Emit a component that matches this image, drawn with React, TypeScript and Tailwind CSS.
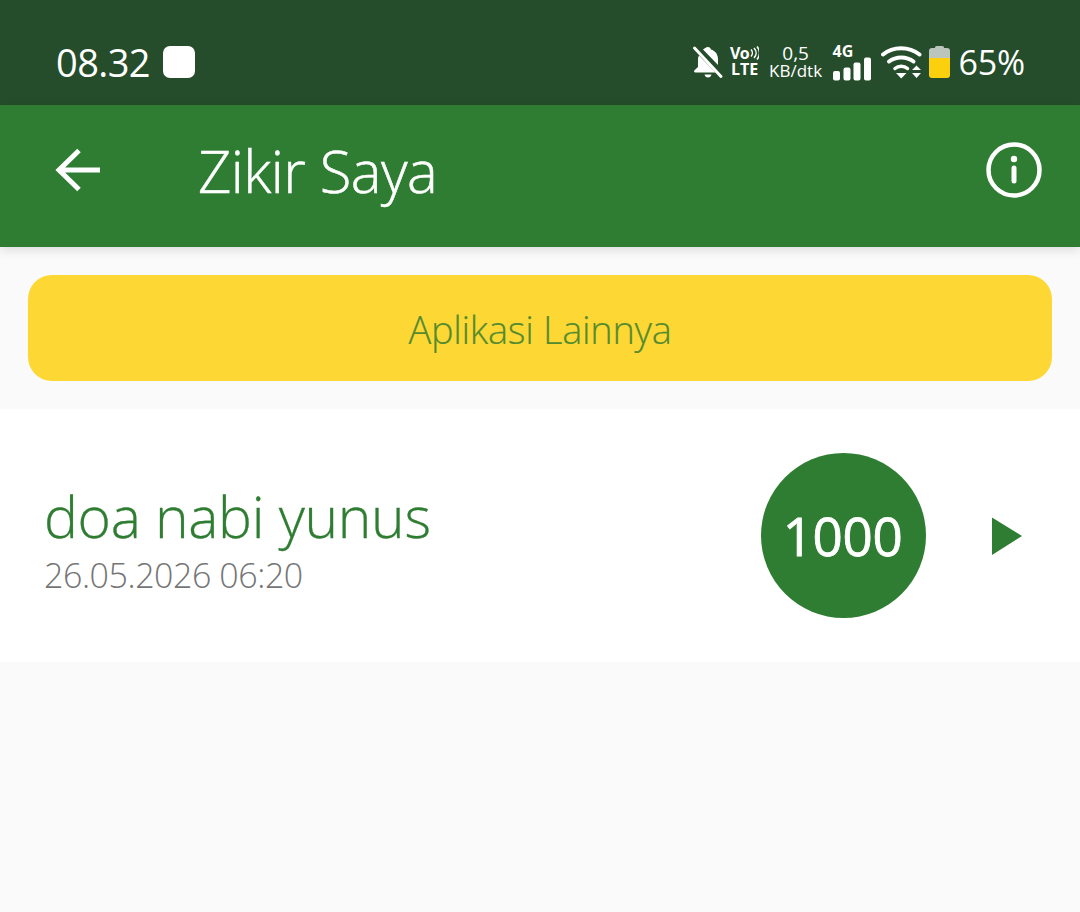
import React from "react";

const F = "font-['Open_Sans',sans-serif]";

function Bell() {
  return (
    <svg width="32" height="34" viewBox="0 0 32 34" className="block">
      <path d="M16 2c1.600 0 2.700 1 2.900 2.400C23.500 5.700 26 9.500 26 14v6L11 4.500C12.300 3.500 14 2 16 2z" fill="#fff" />
      <path d="M7 10.500 23.500 27.500H3.500c-1.500 0-1.900-1.400-1-2.300L6 22v-8c0-1.300.3-2.500 1-3.500z" fill="#fff" />
      <path d="M12.500 29.500h7c-.4 1.700-1.800 3-3.500 3s-3.100-1.300-3.500-3z" fill="#fff" />
      <path d="M2.500 3 29 31.500" stroke="#fff" strokeWidth="3" strokeLinecap="round" />
    </svg>
  );
}

function Signal() {
  return (
    <svg width="38" height="24" viewBox="0 0 38 24" className="block">
      <rect x="0" y="14" width="7" height="9.500" rx="2" fill="#fff" />
      <rect x="10.500" y="10.500" width="7" height="13" rx="2" fill="#fff" />
      <rect x="20.500" y="5.500" width="7" height="18" rx="2" fill="#fff" />
      <rect x="31" y="0.500" width="7" height="23" rx="2" fill="#fff" />
    </svg>
  );
}

function Wifi() {
  return (
    <svg width="41" height="34" viewBox="0 0 41 34" className="block">
      <path d="M2 9.500C12 1 28 1 38.500 9.500" stroke="#fff" strokeWidth="4" fill="none" strokeLinecap="round" />
      <path d="M8 16.500C15 11 25.500 11 32.500 16.500" stroke="#fff" strokeWidth="4" fill="none" strokeLinecap="round" />
      <path d="M14 23.500C17.500 20.500 23 20.500 26.500 23.500" stroke="#fff" strokeWidth="3.500" fill="none" strokeLinecap="round" />
      <path d="M15 28h10.500l-5.250 5.500z" fill="#fff" />
      <path d="M31 25l4.500-4.500L40 25z M31 28h9l-4.500 5z" fill="#fff" />
    </svg>
  );
}

function Battery() {
  return (
    <svg width="21" height="33" viewBox="0 0 21 33" className="block">
      <path d="M6 2.500a1.500 1.500 0 0 1 1.500-1.500h6A1.500 1.500 0 0 1 15 2.500V3h3a3 3 0 0 1 3 3v7H0V6a3 3 0 0 1 3-3h3z" fill="#bcc5bd" />
      <path d="M0 13h21v17a3 3 0 0 1-3 3H3a3 3 0 0 1-3-3z" fill="#fdd00e" />
    </svg>
  );
}

function Waves() {
  return (
    <svg width="9" height="14" viewBox="0 0 9 14" className="block">
      <path d="M1 3.500c1.800 2 1.800 5 0 7" stroke="#fff" strokeWidth="1.500" fill="none" />
      <path d="M4 2c2.800 3 2.800 7 0 10" stroke="#fff" strokeWidth="1.500" fill="none" />
      <path d="M7 .5c3.200 4 3.200 9 0 13" stroke="#fff" strokeWidth="1.500" fill="none" />
    </svg>
  );
}

export default function App() {
  return (
    <div className={`${F} min-h-[912px] bg-[#fafafa] flex flex-col`}>
      <div className="h-[105px] bg-[#254d2b] flex items-center justify-between pl-[56px] pr-[55px] text-white pt-[33px] pb-[15px]">
        <div className="flex items-center gap-[13px]">
          <span className="text-[38px] leading-none font-normal tracking-[-0.6px]">08.32</span>
          <span className="w-[32px] h-[32px] bg-white rounded-[7px]" />
        </div>
        <div className="flex items-center">
          <Bell />
          <div className="ml-[6px] flex flex-col items-center w-[30px]">
            <span className="flex items-center h-[16px] gap-[1px]">
              <span className="text-[16px] leading-[16px] font-bold tracking-[-0.5px]">Vo</span>
              <Waves />
            </span>
            <span className="text-[16px] leading-[17px] font-bold">LTE</span>
          </div>
          <div className="ml-[8px] flex flex-col items-center w-[56px]">
            <span className="text-[19px] leading-[18px]">0,5</span>
            <span className="text-[17px] leading-[18px]">KB/dtk</span>
          </div>
          <div className="ml-[9px] w-[38px] relative h-[36px]">
            <span className="absolute left-0 -top-[1px] text-[16px] leading-[16px] font-bold">4G</span>
            <span className="absolute -bottom-[1px] left-0"><Signal /></span>
          </div>
          <span className="ml-[10px]"><Wifi /></span>
          <span className="ml-[7px]"><Battery /></span>
          <span className="ml-[9px] text-[34px] leading-none tracking-[-0.2px]">65%</span>
        </div>
      </div>

      <div className="h-[142px] bg-[#2f7d32] flex items-center justify-between pl-[55px] pr-[38px] pb-[12px] text-white shadow-[0_3px_10px_rgba(0,0,0,0.12)] relative">
        <div className="flex items-center">
          <svg width="46" height="46" viewBox="0 0 46 46" className="block">
            <path d="M45 23H4 M24 3.500 4 23l20 19.500" stroke="#fff" strokeWidth="5" fill="none" strokeLinejoin="miter" />
          </svg>
          <h1 className="ml-[97px] mt-[2px] text-[58px] leading-none font-light tracking-[-0.6px] [-webkit-text-stroke:0.5px_#fff]">Zikir Saya</h1>
        </div>
        <svg width="56" height="56" viewBox="0 0 56 56" className="block">
          <circle cx="28" cy="28" r="25.500" stroke="#fff" strokeWidth="4.500" fill="none" />
          <circle cx="28" cy="17" r="3.200" fill="#fff" />
          <path d="M28 26v13" stroke="#fff" strokeWidth="5" strokeLinecap="round" />
        </svg>
      </div>

      <div className="px-[28px] pt-[28px] pb-[28px]">
        <button className="w-full h-[106px] pt-[3px] rounded-[24px] bg-[#fdd835] text-[#558b2f] text-[38px] font-light tracking-[-0.3px] [-webkit-text-stroke:0.2px_#558b2f] flex items-center justify-center">
          Aplikasi Lainnya
        </button>
      </div>

      <div className="h-[253px] bg-white flex items-center pl-[44px] pr-[57px]">
        <div className="flex-1 flex flex-col mt-[7px]">
          <span className="text-[57px] leading-[62px] font-light text-[#2f7d32] tracking-[-0.35px] [-webkit-text-stroke:0.3px_#2f7d32]">doa nabi yunus</span>
          <span className="mt-[9px] text-[34px] leading-[38px] font-light text-[#757575] tracking-[-0.45px]">26.05.2026 06:20</span>
        </div>
        <div className="w-[165px] h-[165px] rounded-full bg-[#2f7d32] text-white flex items-center justify-center text-[53px] font-normal tracking-[-0.4px] [-webkit-text-stroke:0.8px_#fff] mr-[65px] pr-[2px]">
          1000
        </div>
        <svg width="32" height="40" viewBox="0 0 32 40" className="block">
          <path d="M1 1.500 31 20 1 39z" fill="#2f7d32" />
        </svg>
      </div>
    </div>
  );
}
